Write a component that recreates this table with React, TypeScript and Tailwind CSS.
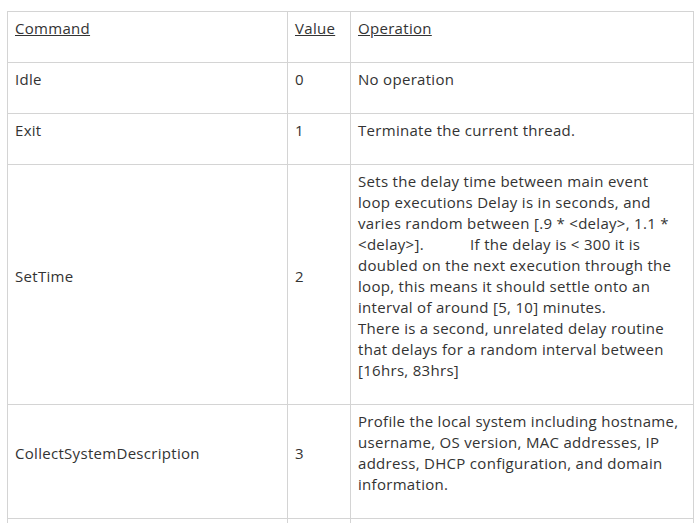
import React from "react";

const rows = [
  { cmd: "Idle", value: "0", op: ["No operation"] },
  { cmd: "Exit", value: "1", op: ["Terminate the current thread."] },
  {
    cmd: "SetTime",
    value: "2",
    op: [
      "Sets the delay time between main event",
      "loop executions Delay is in seconds, and",
      "varies random between [.9 * <delay>, 1.1 *",
      "<delay>].\u00a0\u00a0\u00a0\u00a0\u00a0\u00a0\u00a0\u00a0\u00a0\u00a0\u00a0If the delay is < 300 it is",
      "doubled on the next execution through the",
      "loop, this means it should settle onto an",
      "interval of around [5, 10] minutes.",
      "There is a second, unrelated delay routine",
      "that delays for a random interval between",
      "[16hrs, 83hrs]",
    ],
  },
  {
    cmd: "CollectSystemDescription",
    value: "3",
    op: [
      "Profile the local system including hostname,",
      "username, OS version, MAC addresses, IP",
      "address, DHCP configuration, and domain",
      "information.",
    ],
  },
  { cmd: "", value: "", op: [""] },
];

const cell = "border border-[#d4d4d4] pl-[7px] pr-2 pt-[6px] pb-[23px] align-middle";

export default function App() {
  return (
    <div className="min-h-[523px] bg-white pl-[7px] pt-[11px]" style={{ fontFamily: "'Open Sans', sans-serif" }}>
      <table className="w-[686px] table-fixed border-collapse text-[15px] leading-[21px] tracking-[0.3px] text-[#333]">
        <colgroup>
          <col className="w-[280px]" />
          <col className="w-[63px]" />
          <col className="w-[343px]" />
        </colgroup>
        <thead>
          <tr>
            <th className={`${cell} text-left font-normal align-top`}><span className="underline">Command</span></th>
            <th className={`${cell} text-left font-normal align-top`}><span className="underline">Value</span></th>
            <th className={`${cell} text-left font-normal align-top`}><span className="underline">Operation</span></th>
          </tr>
        </thead>
        <tbody>
          {rows.map((r, i) => (
            <tr key={i}>
              <td className={cell}>{r.cmd}</td>
              <td className={cell}>{r.value}</td>
              <td className={cell}>
                {r.op.map((line, j) => (
                  <div key={j} className="whitespace-nowrap">{line || "\u00a0"}</div>
                ))}
              </td>
            </tr>
          ))}
        </tbody>
      </table>
    </div>
  );
}
